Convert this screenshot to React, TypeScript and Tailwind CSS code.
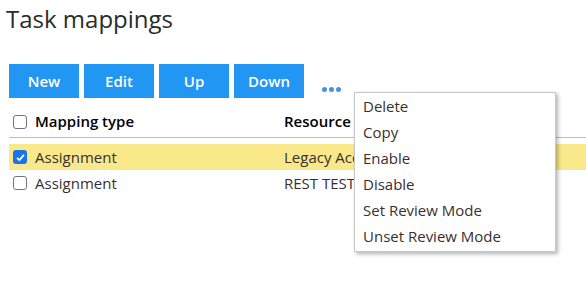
import React, { useState } from 'react';

const rows = [
  { id: 1, type: 'Assignment', resource: 'Legacy Access', checked: true },
  { id: 2, type: 'Assignment', resource: 'REST TEST', checked: false },
];

const menuItems = ['Delete', 'Copy', 'Enable', 'Disable', 'Set Review Mode', 'Unset Review Mode'];

const Checkbox: React.FC<{ checked: boolean }> = ({ checked }) =>
  checked ? (
    <span className="w-[14px] h-[14px] rounded-[3px] bg-[#1a73e8] flex items-center justify-center">
      <svg viewBox="0 0 12 12" className="w-[11px] h-[11px]">
        <path d="M2.2 6.3 L4.8 8.8 L9.8 3.2" fill="none" stroke="white" strokeWidth="1.9" />
      </svg>
    </span>
  ) : (
    <span className="w-[14px] h-[14px] rounded-[3px] border border-[#767676] bg-white" />
  );

export default function App() {
  const [items] = useState(rows);

  return (
    <div className="relative w-[586px] h-[284px] overflow-hidden bg-white text-[#333] font-['Open_Sans',sans-serif]">
      <h1 className="pl-[6px] pt-[2px] text-[24px] leading-[34px] font-normal text-[#2b2b2b]">Task mappings</h1>

      {/* toolbar */}
      <div className="flex items-center gap-[5px] pl-[9px] mt-[28px]">
        {['New', 'Edit', 'Up', 'Down'].map((b) => (
          <button
            key={b}
            className="w-[70px] h-[34px] bg-[#2196f3] text-white text-[15px] font-semibold"
          >
            {b}
          </button>
        ))}
        <div className="flex gap-[2px] ml-[13px] mt-[16px]">
          <span className="w-[5px] h-[5px] rounded-full bg-[#4a90e2]" />
          <span className="w-[5px] h-[5px] rounded-full bg-[#4a90e2]" />
          <span className="w-[5px] h-[5px] rounded-full bg-[#4a90e2]" />
        </div>
      </div>

      {/* table */}
      <div className="ml-[9px] mt-[8px]">
        <div className="flex items-center h-[32px] border-b border-[#bdbdbd] text-[15px] font-semibold text-black">
          <div className="w-[275px] flex items-center gap-[8px] pl-[4px]">
            <Checkbox checked={false} />
            <span>Mapping type</span>
          </div>
          <div>Resource</div>
        </div>
        <div className="mt-[6px]">
          {items.map((r) => (
            <div
              key={r.id}
              className={`flex items-center h-[26px] text-[15px] text-[#3a2f2f] ${r.checked ? 'bg-[#f9e98a]' : ''}`}
            >
              <div className="w-[275px] flex items-center gap-[8px] pl-[4px]">
                <Checkbox checked={r.checked} />
                <span>{r.type}</span>
              </div>
              <div className="whitespace-nowrap">{r.resource}</div>
            </div>
          ))}
        </div>
      </div>

      {/* dropdown menu */}
      <div className="absolute left-[354px] top-[92px] w-[202px] bg-white border border-[#c8c8c8] shadow-[2px_2px_4px_rgba(0,0,0,0.3)] pb-[2px]">
        {menuItems.map((m) => (
          <div key={m} className="h-[26px] flex items-center pl-[8px] text-[15px] text-[#3a2f2f]">
            {m}
          </div>
        ))}
      </div>
    </div>
  );
}
